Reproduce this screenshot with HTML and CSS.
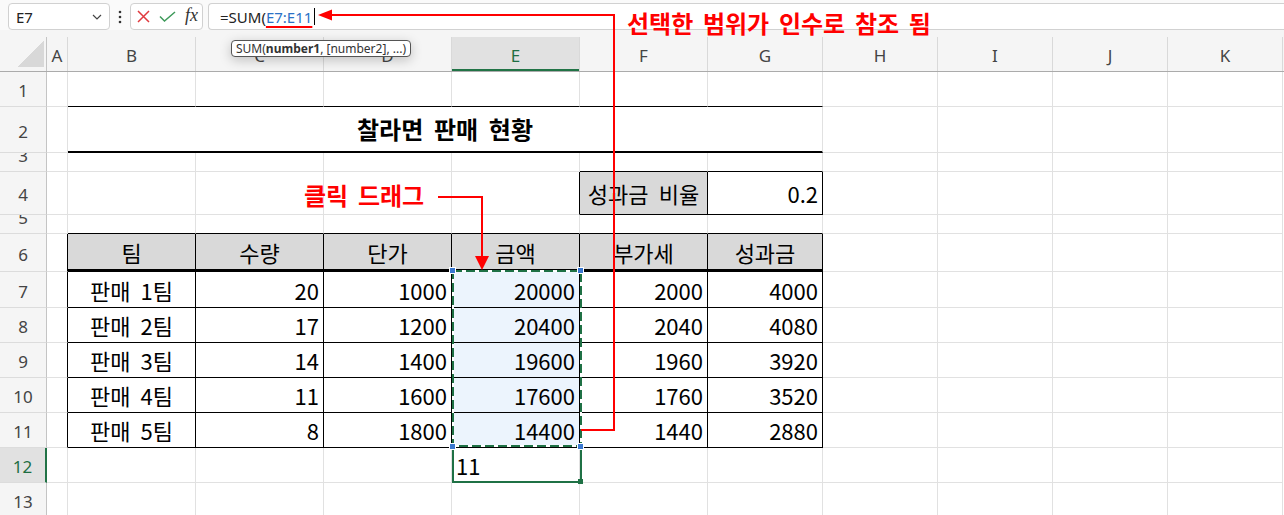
FILE: index.html
```html
<!DOCTYPE html>
<html lang="ko-KR">
  <head>
    <meta charset="utf-8">
    <title>SUM 함수 범위 참조</title>
    <link rel="stylesheet" href="styles.css">
  </head>

  <body>
    <main class="app">
      <!-- 수식 입력줄 -->
      <header class="formula-bar">
        <div class="name-box">
          E7
          <svg width="10" height="6" viewBox="0 0 10 6" fill="none" stroke="#444" stroke-width="1.2">
            <path d="M1 1 5 5 9 1" />
          </svg>
        </div>
        <span class="more">
          <svg width="4" height="14" viewBox="0 0 4 14" fill="#333">
            <circle cx="2" cy="2" r="1.3" />
            <circle cx="2" cy="7" r="1.3" />
            <circle cx="2" cy="12" r="1.3" />
          </svg>
        </span>
        <div class="fx-buttons">
          <svg width="13" height="13" viewBox="0 0 13 13" fill="none" stroke="#e0393e" stroke-width="1.5">
            <path d="M1 1 12 12M12 1 1 12" />
          </svg>
          <svg width="17" height="11" viewBox="0 0 17 11" fill="none" stroke="#3e9a5a" stroke-width="1.5">
            <path d="M1 5.5 5.5 10 16 1" />
          </svg>
          <i class="fx">fx</i>
        </div>
        <div class="formula">=SUM(<span class="ref">E7:E11</span><span class="caret"></span></div>
      </header>

      <!-- 워크시트 -->
      <section class="sheet">
        <div class="row col-head">
          <div class="corner"></div>
          <div>A</div><div>B</div><div>C</div><div>D</div><div class="on">E</div>
          <div>F</div><div>G</div><div>H</div><div>I</div><div>J</div><div>K</div>
        </div>

        <div class="row">
          <div class="rh">1</div><div></div>
          <div class="bb"></div><div class="bb"></div><div class="bb"></div>
          <div class="bb"></div><div class="bb"></div><div class="bb"></div>
          <div></div><div></div><div></div><div></div>
        </div>

        <div class="row title-row">
          <div class="rh">2</div><div></div>
          <div class="title bb2">찰라면 판매 현황</div>
          <div></div><div></div><div></div><div></div>
        </div>

        <div class="row thin">
          <div class="rh">3</div><div></div>
          <div></div><div></div><div></div><div></div>
          <div class="bb"></div><div class="bb"></div>
          <div></div><div></div><div></div><div></div>
        </div>

        <div class="row rate-row">
          <div class="rh">4</div><div></div>
          <div></div><div></div><div></div><div class="br"></div>
          <div class="br bb fill mid">성과금 비율</div>
          <div class="br bb num">0.2</div>
          <div></div><div></div><div></div><div></div>
        </div>

        <div class="row thin">
          <div class="rh">5</div><div></div>
          <div class="bb"></div><div class="bb"></div><div class="bb"></div>
          <div class="bb"></div><div class="bb"></div><div class="bb"></div>
          <div></div><div></div><div></div><div></div>
        </div>

        <div class="row head-row">
          <div class="rh">6</div><div class="br"></div>
          <div class="br bb3 fill mid">팀</div>
          <div class="br bb3 fill mid">수량</div>
          <div class="br bb3 fill mid">단가</div>
          <div class="br bb3 fill mid">금액</div>
          <div class="br bb3 fill mid">부가세</div>
          <div class="br bb3 fill mid">성과금</div>
          <div></div><div></div><div></div><div></div>
        </div>

        <div class="row first">
          <div class="rh">7</div><div class="br"></div>
          <div class="br bb mid">판매 1팀</div>
          <div class="br bb num">20</div>
          <div class="br bb num">1000</div>
          <div class="br bb num sel">20000</div>
          <div class="br bb num">2000</div>
          <div class="br bb num">4000</div>
          <div></div><div></div><div></div><div></div>
        </div>

        <div class="row">
          <div class="rh">8</div><div class="br"></div>
          <div class="br bb mid">판매 2팀</div>
          <div class="br bb num">17</div>
          <div class="br bb num">1200</div>
          <div class="br bb num sel">20400</div>
          <div class="br bb num">2040</div>
          <div class="br bb num">4080</div>
          <div></div><div></div><div></div><div></div>
        </div>

        <div class="row">
          <div class="rh">9</div><div class="br"></div>
          <div class="br bb mid">판매 3팀</div>
          <div class="br bb num">14</div>
          <div class="br bb num">1400</div>
          <div class="br bb num sel">19600</div>
          <div class="br bb num">1960</div>
          <div class="br bb num">3920</div>
          <div></div><div></div><div></div><div></div>
        </div>

        <div class="row">
          <div class="rh">10</div><div class="br"></div>
          <div class="br bb mid">판매 4팀</div>
          <div class="br bb num">11</div>
          <div class="br bb num">1600</div>
          <div class="br bb num sel">17600</div>
          <div class="br bb num">1760</div>
          <div class="br bb num">3520</div>
          <div></div><div></div><div></div><div></div>
        </div>

        <div class="row">
          <div class="rh">11</div><div class="br"></div>
          <div class="br bb mid">판매 5팀</div>
          <div class="br bb num">8</div>
          <div class="br bb num">1800</div>
          <div class="br bb num sel">14400</div>
          <div class="br bb num">1440</div>
          <div class="br bb num">2880</div>
          <div></div><div></div><div></div><div></div>
        </div>

        <div class="row">
          <div class="rh on">12</div><div></div>
          <div></div><div></div><div></div>
          <div>11</div>
          <div></div><div></div><div></div><div></div><div></div><div></div>
        </div>

        <div class="row">
          <div class="rh">13</div><div></div>
          <div></div><div></div><div></div><div></div><div></div>
          <div></div><div></div><div></div><div></div><div></div>
        </div>
      </section>

      <!-- 함수 도움말 -->
      <div class="tip">SUM(<b>number1</b>, [number2], ...)</div>

      <!-- 선택 영역과 설명 화살표 -->
      <svg class="overlay" width="1284" height="515" viewBox="0 0 1284 515">
        <rect x="453" y="446" width="128" height="36" fill="none" stroke="#1f7145" stroke-width="2" />
        <rect x="453" y="271" width="128" height="175" fill="none" stroke="#fff" stroke-width="2" />
        <rect x="453" y="271" width="128" height="175" fill="none" stroke="#1f7145" stroke-width="2" stroke-dasharray="9 4" />
        <g fill="#3a78d0" stroke="#fff" stroke-width="1">
          <rect x="449.5" y="267.5" width="6" height="6" />
          <rect x="577.5" y="267.5" width="6" height="6" />
          <rect x="449.5" y="443.5" width="6" height="6" />
          <rect x="577.5" y="443.5" width="6" height="6" />
        </g>
        <rect x="578" y="479" width="5" height="5" fill="#1f7145" />

        <g fill="none" stroke="#ff0000" stroke-width="2">
          <path d="M331 15H614V430H581" />
          <path d="M438 197H482V258" />
        </g>
        <g fill="#ff0000">
          <polygon points="318,15 332,9.5 332,20.5" />
          <polygon points="482,270 475,256 489,256" />
        </g>
      </svg>

      <p class="note note-top">선택한 범위가 인수로 참조 됨</p>
      <p class="note note-drag">클릭 드래그</p>
    </main>
  </body>
</html>
```

FILE: styles.css
```css
* {
  box-sizing: border-box;
}

body {
  margin: 0;
  background-color: #fff;
  font-family: "Noto Sans", "Noto Sans CJK KR", sans-serif;
}

.app {
  position: relative;
  width: 1284px;
  height: 515px;
  overflow: hidden;
}

/* 수식 입력줄 */
.formula-bar {
  display: flex;
  align-items: flex-end;
  height: 30px;
  padding-left: 8px;
  background-color: #fafafa;
  color: #222;
  font-size: 15px;
}

.name-box,
.fx-buttons,
.formula {
  display: flex;
  align-items: center;
  height: 27px;
  border: 1px solid #d1d1d1;
  border-radius: 4px;
  background-color: #fff;
}

.name-box {
  justify-content: space-between;
  width: 102px;
  padding: 0 7px;
}

.more {
  display: flex;
  justify-content: center;
  align-items: center;
  width: 20px;
  height: 27px;
}

.fx-buttons {
  gap: 9px;
  width: 73px;
  padding-left: 6px;
}

.fx {
  margin-top: -2px;
  font-family: "Liberation Serif", serif;
  font-size: 18px;
  color: #333;
}

.formula {
  flex: 1;
  margin-left: 5px;
  padding-left: 11px;
  border-right: 0;
  border-radius: 4px 0 0 4px;
  white-space: pre;
}

.ref {
  color: #2c72c6;
  text-decoration: underline;
  text-decoration-color: #ff0000;
  text-decoration-thickness: 2px;
  text-underline-offset: 3px;
}

.caret {
  display: inline-block;
  width: 1px;
  height: 17px;
  margin-left: 2px;
  background-color: #000;
}

/* 워크시트 */
.row {
  display: grid;
  grid-template-columns: 47px 21px repeat(5, 128px) repeat(5, 115px);
  height: 35px;

  > div {
    display: flex;
    align-items: center;
    min-width: 0;
    padding: 0 4px;
    overflow: hidden;
    white-space: nowrap;
    border-right: 1px solid #e1e1e1;
    border-bottom: 1px solid #e1e1e1;
    font: 22px/1 "Noto Sans CJK KR", sans-serif;
    word-spacing: 4px;
    color: #000;
  }
}

.row.first { height: 36px; }
.row.title-row { height: 46px; }
.row.rate-row { height: 43px; }
.row.head-row { height: 38px; }
.row.thin { height: 19px; }

.col-head {
  height: 42px;
  padding-top: 7px;
  border-bottom: 1px solid #ababab;
  background-color: #f5f5f5;

  > div {
    justify-content: center;
    padding-top: 2px;
    border-bottom: 0;
    border-right-color: #d9d9d9;
    font: 17px/1 "Noto Sans", sans-serif;
    color: #444;
  }

  > .on {
    background-color: #e1e1e1;
    color: #1e6e42;
    box-shadow: inset 0 -2px 0 #217346;
  }
}

.row > .corner {
  border-right-color: #c4c4c4;
  background: linear-gradient(to bottom right, transparent 50%, #d8d8d8 50%) 17px 4px / 27px 26px no-repeat;
}

.row > .rh {
  justify-content: center;
  padding-top: 3px;
  background-color: #f5f5f5;
  border-right-color: #c4c4c4;
  border-bottom-color: #dcdcdc;
  font: 17px/1 "Noto Sans", sans-serif;
  color: #444;

  &.on {
    background-color: #e1e1e1;
    border-right: 2px solid #217346;
    color: #1e6e42;
  }
}

/* 행 높이가 낮으면 번호의 아랫부분만 보임 */
.row.thin > .rh {
  display: block;
  padding-top: 1px;
  text-align: center;
  line-height: 3px;
}

.row > .title {
  grid-column: span 6;
  justify-content: center;
  font-weight: 700;
  font-size: 24px;
}

.row > .num { justify-content: flex-end; }
.row > .mid { justify-content: center; }
.row > .fill { background-color: #d9d9d9; }
.row > .sel { background-color: #ecf4fd; }
.row > .br { border-right-color: #000; }
.row > .bb { border-bottom-color: #000; }
.row > .bb2 { border-bottom: 2px solid #000; }
.row > .bb3 { border-bottom: 3px solid #000; }

/* 함수 도움말 */
.tip {
  position: absolute;
  left: 231px;
  top: 40px;
  height: 17px;
  padding: 0 4px;
  border: 1px solid #555;
  border-radius: 4px;
  background-color: #fff;
  box-shadow: 0 3px 12px rgba(0, 0, 0, 0.22);
  font-size: 12px;
  line-height: 15px;
  color: #333;
  white-space: nowrap;
}

.overlay {
  position: absolute;
  left: 0;
  top: 0;
  pointer-events: none;
}

.note {
  position: absolute;
  margin: 0;
  font: 700 24px/1 "Noto Sans CJK KR", sans-serif;
  word-spacing: 3px;
  color: #ff0000;
  white-space: nowrap;
}

.note-top {
  left: 627px;
  top: 11px;
}

.note-drag {
  left: 304px;
  top: 183px;
}
```
